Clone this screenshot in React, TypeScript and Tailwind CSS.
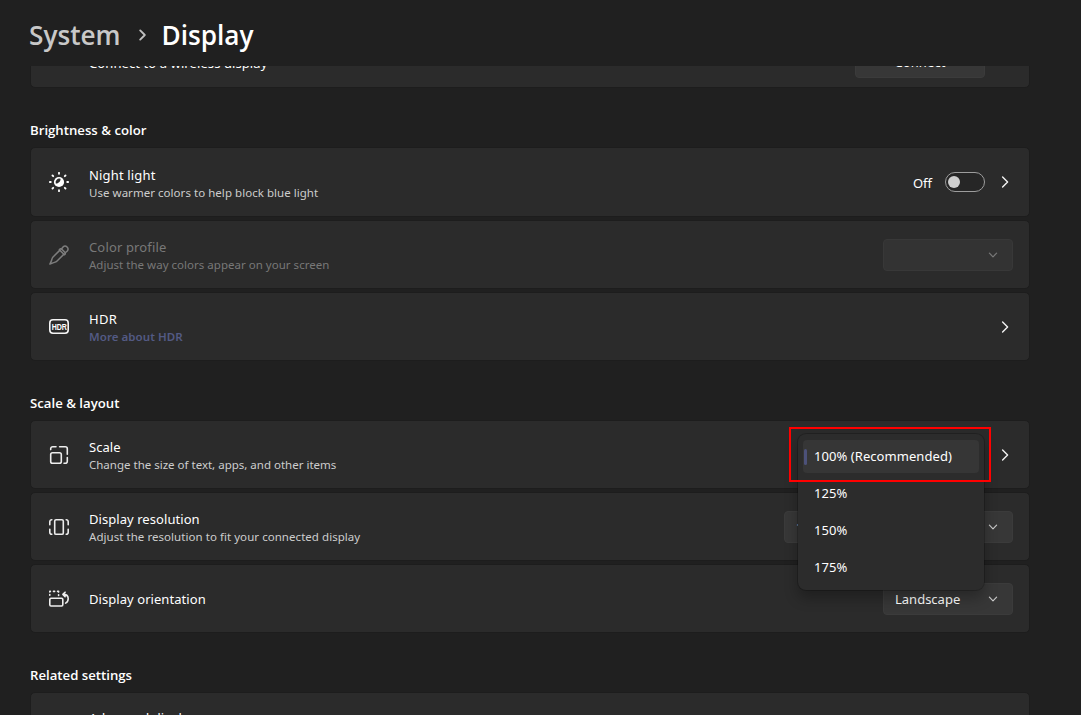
import React from "react";
import type { ReactNode } from "react";

function ChevronRight() {
  return (
    <svg width="16" height="16" viewBox="0 0 16 16" fill="none" stroke="#f2f2f2" strokeWidth="1.4" strokeLinecap="round" strokeLinejoin="round">
      <path d="M5.6 2.9 10.6 8 5.6 13.1" />
    </svg>
  );
}

function ChevronDown({ className }: { className: string }) {
  return (
    <svg className={className} width="10" height="10" viewBox="0 0 10 10" fill="none" stroke="currentColor" strokeWidth="1.2" strokeLinecap="round" strokeLinejoin="round">
      <path d="M1.4 3.2 5 6.8 8.6 3.2" />
    </svg>
  );
}

function NightLightIcon() {
  return (
    <svg width="20" height="20" viewBox="-10 -10 20 20" fill="none">
      <circle r="5.1" fill="#fff" />
      <path d="M1.5 -3.2A3.7 3.7 0 0 0 -3.2 1.5C-0.8 1.9 1.9 -0.8 1.5 -3.2Z" fill="#2b2b2b" />
      <path d="M0-9.2V-8.2M0 8.2V9.2M-9.2 0H-8.2M8.2 0H9.2M-6.5-6.5-5.8-5.8M5.8 5.8 6.5 6.5M-6.5 6.5-5.8 5.8M5.8-5.8 6.5-6.5" stroke="#fff" strokeWidth="1.8" strokeLinecap="round" />
    </svg>
  );
}

function EyedropperIcon() {
  return (
    <svg width="20" height="20" viewBox="0 0 20 20" fill="none" stroke="#7d7d7d" strokeWidth="1.5" strokeLinecap="round" strokeLinejoin="round">
      <path d="M12.2 4.2 14.1 1.9A2.95 2.95 0 0 1 18.3 6L16 8" />
      <path d="M10.3 4.7C11 3.6 12.2 3.6 12.8 4.2L15.9 7.3C16.6 8 16.5 9.1 15.4 9.8Z" />
      <path d="M10.7 5.4 3.8 12.2C3 13 2.8 14.6 2.5 15.6L0.9 19.1 4.6 17.6C5.8 17.2 7 17 7.8 16.2L14.7 9.4" />
    </svg>
  );
}

function HdrIcon() {
  return (
    <div className="relative flex h-[15px] w-5 items-center justify-center">
      <svg className="absolute inset-0" width="20" height="15" viewBox="0 0 20 15" fill="none" stroke="#f4f4f4" strokeWidth="1.6">
        <rect x="0.8" y="0.8" width="18.4" height="13.4" rx="3.2" />
      </svg>
      <span className="scale-x-[0.74] font-['Liberation_Sans'] text-[9.5px] leading-none font-bold text-white">HDR</span>
    </div>
  );
}

function ScaleIcon() {
  return (
    <svg width="20" height="20" viewBox="0 0 20 20" fill="none" stroke="#ededed" strokeWidth="1.6" strokeLinecap="round">
      <rect x="1.7" y="7.7" width="10.6" height="10.6" rx="1.8" />
      <path d="M1.7 4.6V3.7A2 2 0 0 1 3.7 1.7H7M10.6 1.7H16.3A2 2 0 0 1 18.3 3.7V9.2M18.3 12.6V16.3A2 2 0 0 1 16.3 18.3H15" />
    </svg>
  );
}

function ResolutionIcon() {
  return (
    <svg width="20" height="20" viewBox="0 0 20 20" fill="none" stroke="#ededed" strokeWidth="1.6" strokeLinecap="round">
      <rect x="5.7" y="2.7" width="8.6" height="14.6" rx="1.4" />
      <path d="M2.8 2.7A2 2 0 0 0 0.8 4.7V7.7M0.8 12.3V15.3A2 2 0 0 0 2.8 17.3M17.2 2.7A2 2 0 0 1 19.2 4.7V7.7M19.2 12.3V15.3A2 2 0 0 1 17.2 17.3" />
    </svg>
  );
}

function OrientationIcon() {
  return (
    <svg width="20" height="20" viewBox="0 0 20 20" fill="none" stroke="#ededed" strokeWidth="1.6" strokeLinecap="round" strokeLinejoin="round">
      <rect x="0.8" y="9.2" width="13" height="7.8" rx="1.2" />
      <path d="M0.8 6.2V5.6M0.8 2.9V2.4H1.4M4.5 2.4H5.6M8.6 2.4H9.6V3.1M9.6 5.8V6.4" />
      <path d="M16.6 14.1C18.2 13.3 19.2 11.7 19.2 9.8 19.2 7.2 17.4 5.4 14.4 5.4M16.1 3.2 13.9 5.4 16.1 7.6" />
    </svg>
  );
}

interface RowProps {
  icon?: ReactNode;
  title: string;
  titleClass?: string;
  subtitle?: string;
  subtitleClass?: string;
  className?: string;
  textClass?: string;
  children?: ReactNode;
}

function Row({
  icon,
  title,
  titleClass = "text-white tracking-[0.06px]",
  subtitle,
  subtitleClass = "text-[#cdcdcd]",
  className = "h-[69px]",
  textClass = "",
  children,
}: RowProps) {
  return (
    <div className={`relative flex items-center rounded-[5px] border border-[#1d1d1d] bg-[#2b2b2b] pr-4 pl-[18px] ${className}`}>
      <div className="flex w-10 shrink-0 items-center">{icon}</div>
      <div className={`flex flex-1 flex-col ${textClass}`}>
        <span className={`text-[13px] leading-5 ${titleClass}`}>{title}</span>
        {subtitle && <span className={`text-[11.5px] leading-4 ${subtitleClass}`}>{subtitle}</span>}
      </div>
      {children}
    </div>
  );
}

function SectionTitle({ children }: { children: ReactNode }) {
  return <h2 className="mt-8 mb-[7px] font-['Open_Sans'] text-[13.2px] leading-5 font-semibold">{children}</h2>;
}

function Select({ label, className, arrow = "text-[#c8c8c8]" }: { label?: string; className: string; arrow?: string }) {
  return (
    <div className={`flex h-8 items-center justify-between rounded border pr-3.5 pl-[11px] text-[13px] ${className}`}>
      <span className="pt-0.5">{label}</span>
      <ChevronDown className={arrow} />
    </div>
  );
}

function ScaleMenu() {
  return (
    <>
      <div className="absolute top-[13px] left-[767px] z-10 flex h-[156px] w-[186px] flex-col gap-1 rounded-lg bg-[#2c2c2c] px-[5px] py-1.5 text-[13px] tracking-[0.06px] text-white shadow-[0_0_0_1px_rgba(0,0,0,0.2),0_8px_14px_rgba(0,0,0,0.28)]">
        <div className="flex h-[33px] items-center rounded bg-[#363636] pl-px">
          <span className="mr-[7px] h-4 w-[3px] rounded-full bg-[#4c5179]" />
          <span>100% (Recommended)</span>
        </div>
        <div className="flex h-[33px] items-center pl-[11px]">125%</div>
        <div className="flex h-[33px] items-center pl-[11px]">150%</div>
        <div className="flex h-[33px] items-center pl-[11px]">175%</div>
      </div>
      <div className="absolute top-1.5 left-[758px] z-20 h-[55px] w-[202px] border-2 border-[#ff0000]" />
    </>
  );
}

export default function App() {
  return (
    <div className="flex h-[715px] w-[1081px] flex-col overflow-hidden bg-[#202020] font-['Noto_Sans',sans-serif] text-white">
      <header className="flex h-[66px] shrink-0 items-center pt-1.5 pl-[29px] font-['Open_Sans'] text-[26.2px] font-semibold">
        <span className="w-[92px] text-[#c8c8c8]">System</span>
        <svg className="mr-[15px] mb-0.5 ml-3.5" width="14" height="14" viewBox="0 0 14 14" fill="none" stroke="#c0c0c0" strokeWidth="1.9" strokeLinecap="round" strokeLinejoin="round">
          <path d="M5.2 2.4 9.8 7 5.2 11.6" />
        </svg>
        <span className="-ml-[2.5px]">Display</span>
      </header>

      <main className="flex min-h-0 flex-1 flex-col overflow-hidden pl-[30px]">
        <div className="w-[1000px]">
          <Row title="Connect to a wireless display" className="-mt-[29px] h-[51px]" titleClass="text-white tracking-[0.09px]">
            <div className="mr-7 mb-px flex h-8 w-[130px] items-center justify-center rounded border border-[#3b3b3b] bg-[#373737] pt-px text-[13px] tracking-[0.08px]">Connect</div>
          </Row>

          <SectionTitle>Brightness &amp; color</SectionTitle>
          <div className="flex flex-col gap-[3px]">
            <Row
              icon={<NightLightIcon />}
              title="Night light"
              titleClass="text-white tracking-[0.16px]"
              subtitle="Use warmer colors to help block blue light"
              subtitleClass="text-[#cdcdcd] tracking-[0.04px]"
              className="h-[70px]"
              textClass="pt-px"
            >
              <span className="mr-[13px] pt-[3px] text-[13px]">Off</span>
              <div className="mr-3 flex h-5 w-10 items-center rounded-full border border-[#9d9d9d] bg-[#262626] pl-0.5">
                <span className="size-3 rounded-full bg-[#cfcfcf]" />
              </div>
              <ChevronRight />
            </Row>
            <Row
              icon={<EyedropperIcon />}
              title="Color profile"
              titleClass="text-[#787878] tracking-[0.15px]"
              subtitle="Adjust the way colors appear on your screen"
              subtitleClass="text-[#787878] tracking-[0.02px]"
            >
              <Select className="w-[130px] border-[#383838] bg-[#333333]" arrow="text-[#787878]" />
            </Row>
            <Row
              icon={<HdrIcon />}
              title="HDR"
              titleClass="text-white tracking-[0.3px]"
              subtitle="More about HDR"
              subtitleClass="font-semibold text-[#535a84] tracking-[0.06px]"
            >
              <ChevronRight />
            </Row>
          </div>

          <SectionTitle>Scale &amp; layout</SectionTitle>
          <div className="flex flex-col gap-[3px]">
            <Row icon={<ScaleIcon />} title="Scale" subtitle="Change the size of text, apps, and other items">
              <ChevronRight />
              <ScaleMenu />
            </Row>
            <Row
              icon={<ResolutionIcon />}
              title="Display resolution"
              subtitle="Adjust the resolution to fit your connected display"
              subtitleClass="text-[#cdcdcd] tracking-[0.05px]"
            >
              <Select label="1920 × 1080" className="w-[229px] border-[#3b3b3b] bg-[#373737]" />
            </Row>
            <Row icon={<OrientationIcon />} title="Display orientation">
              <Select label="Landscape" className="w-[130px] border-[#3b3b3b] bg-[#373737]" />
            </Row>
          </div>

          <SectionTitle>Related settings</SectionTitle>
          <Row title="Advanced display" className="h-[69px] pb-[17px]" />
        </div>
      </main>
    </div>
  );
}
